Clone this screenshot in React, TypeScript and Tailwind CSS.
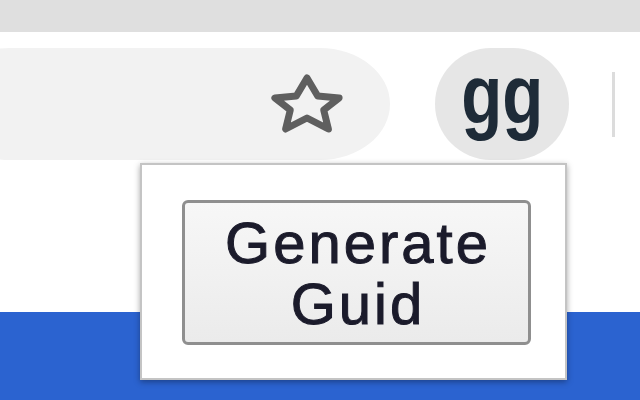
import React from 'react'

function StarOutline() {
    return (
        <svg width="80" height="64" viewBox="0 0 80 64" className="shrink-0">
            <path
                d="M40 6 L50.7 24 L72.1 26 L56.7 38 L61.4 57 L40 46 L18.6 57 L23.3 38 L7.9 26 L29.3 24 Z"
                fill="none"
                stroke="#5f5f5f"
                strokeWidth="7"
                strokeLinejoin="round"
            />
        </svg>
    )
}

export default function App() {
    return (
        <div className="relative w-[640px] h-[400px] overflow-hidden bg-white font-['Liberation_Sans',Arial,sans-serif]">
            {/* tab strip */}
            <div className="h-[32px] bg-[#dfdfdf]" />

            {/* toolbar */}
            <div className="h-[131px] pt-[13px] flex items-center">
                <div className="ml-[-60px] w-[450px] h-[112px] rounded-[70px/56px] bg-[#f2f2f2] flex items-center justify-end pr-[43px]">
                    <StarOutline />
                </div>
                <div className="ml-[45px] w-[134px] h-[112px] rounded-full bg-[#e6e6e6] flex items-center justify-center">
                    <span className="inline-block scale-x-[0.8] text-[84px] leading-none font-bold text-[#1e2b38] -mt-[18px]">gg</span>
                </div>
                <div className="ml-[43px] w-[3px] h-[65px] bg-[#dcdcdc]" />
            </div>

            {/* page */}
            <div className="h-[149px] bg-white" />
            <div className="h-[88px] bg-[#2b63d0]" />

            {/* extension popup */}
            <div className="absolute left-[140px] top-[163px] w-[427px] h-[217px] bg-white border-2 border-[#c4c4c4] shadow-[0_2px_6px_rgba(0,0,0,0.35)] pl-[40px] pt-[35px]">
                <button className="w-[349px] h-[145px] rounded-[6px] border-[3px] border-[#8f8f8f] bg-gradient-to-b from-[#f7f7f7] to-[#ebebeb] flex flex-col items-center justify-center text-[58px] leading-[61px] tracking-[3px] text-[#1b1b2b] [-webkit-text-stroke:1px_#1b1b2b]">
                    <span className="pl-[3px]">Generate</span>
                    <span className="pl-[3px]">Guid</span>
                </button>
            </div>
        </div>
    )
}
